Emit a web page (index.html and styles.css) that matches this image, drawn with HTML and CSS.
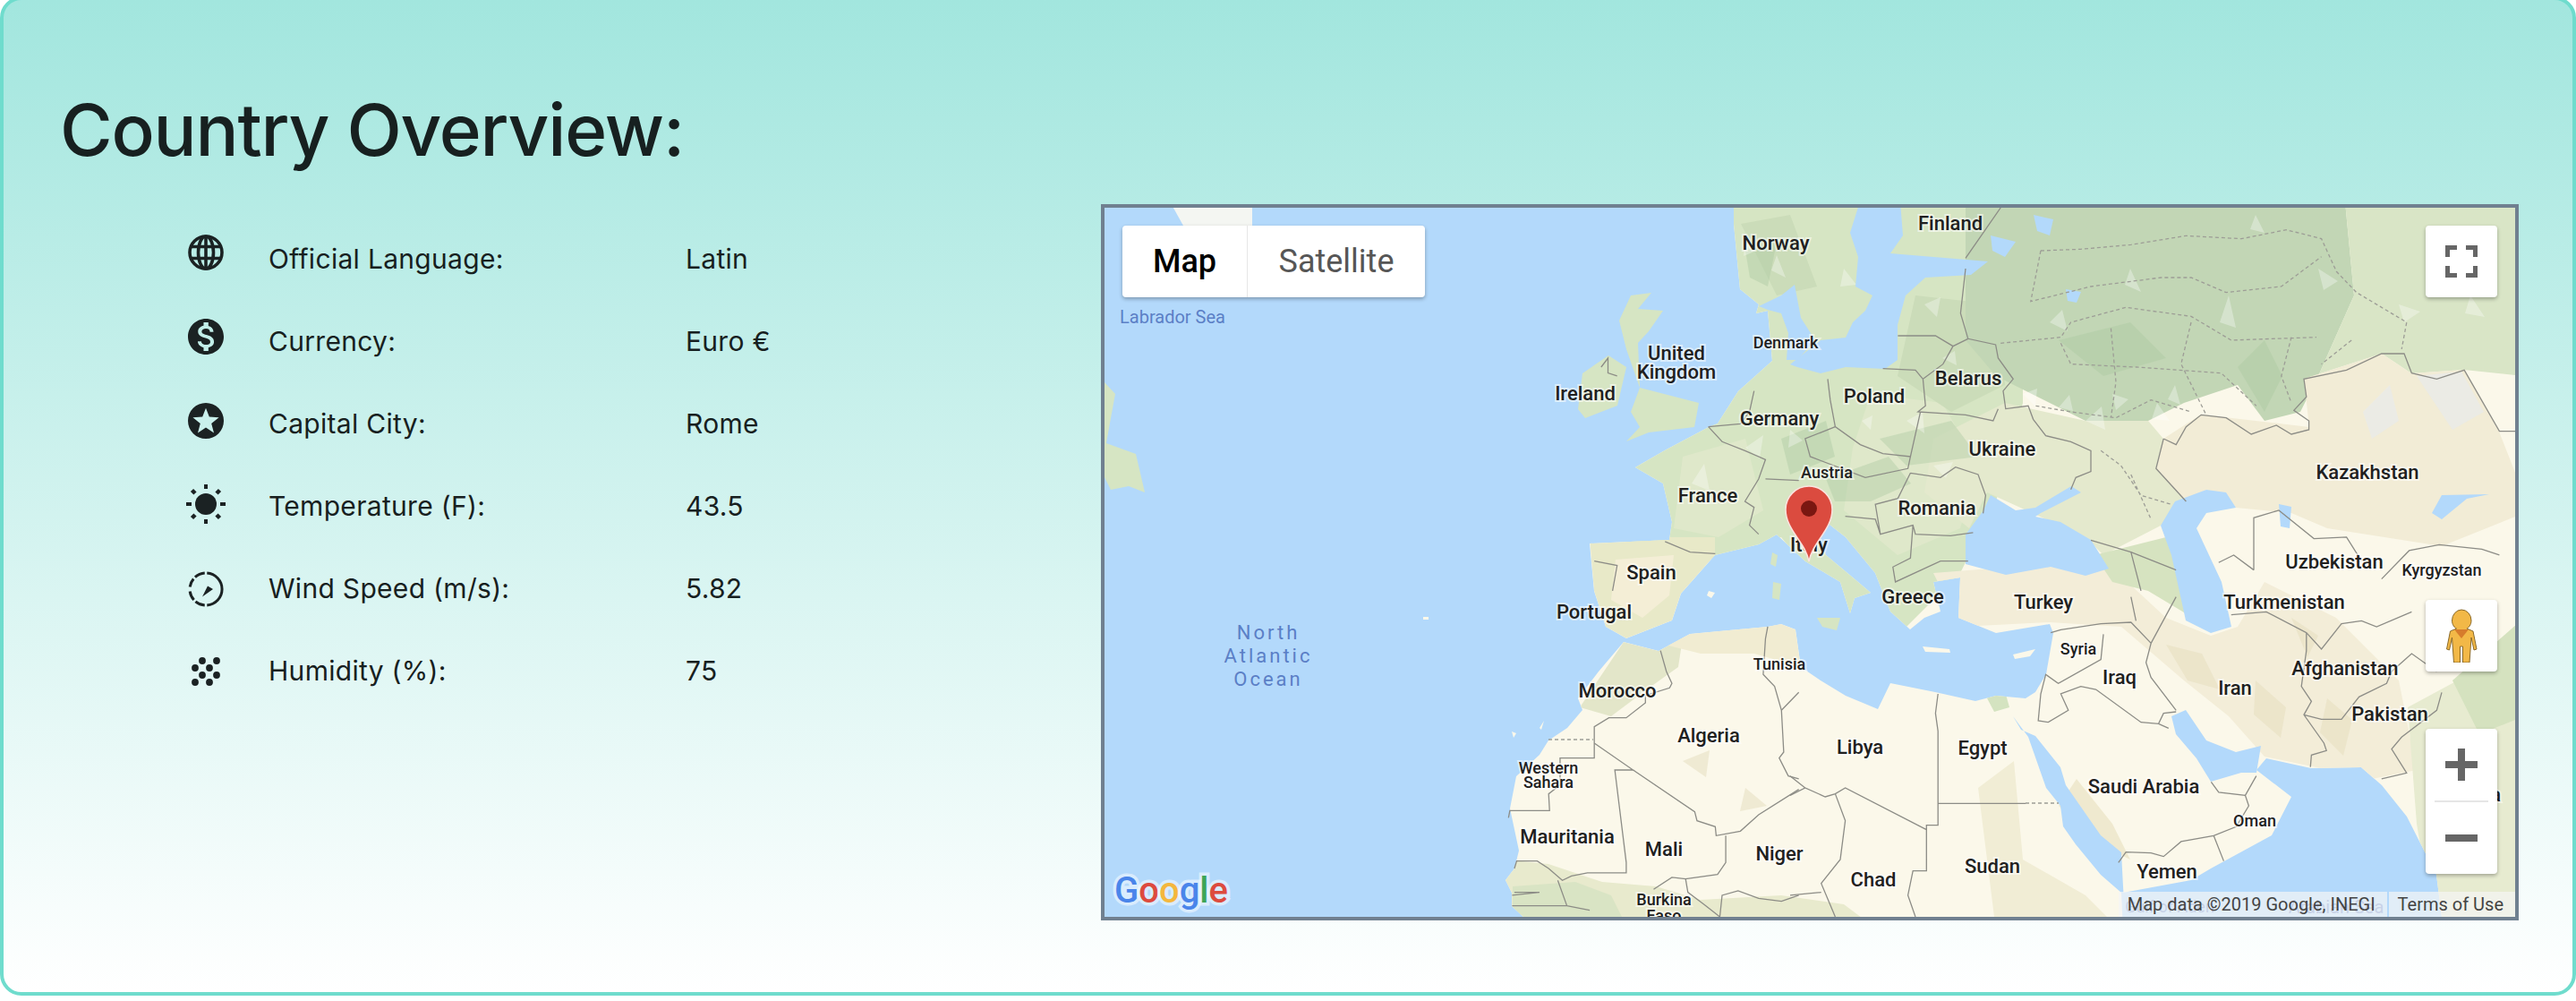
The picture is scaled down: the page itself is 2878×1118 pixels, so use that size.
FILE: index.html
```html
<!DOCTYPE html>
<html>
<head>
  <title>Country Overview</title>
  <link rel="stylesheet" href="styles.css">
</head>
<body>
  <div class="card">
    <h1 class="title">Country Overview:</h1>
    <div class="content">
      <div class="facts">
        <div class="fact">
          <svg class="icon icon-globe" viewBox="0 0 40 40"><g fill="none" stroke="#1b2223" stroke-width="3.6"><circle cx="20" cy="20" r="18"/><ellipse cx="20" cy="20" rx="8.500" ry="18"/><path d="M3 13.500h34M3 26.500h34M20 2v36"/></g></svg>
          <span class="label">Official Language:</span>
          <span class="value">Latin</span>
        </div>
        <div class="fact">
          <svg class="icon icon-dollar" viewBox="2 2 20 20"><path fill="#1b2223" d="M12 2C6.48 2 2 6.48 2 12s4.48 10 10 10 10-4.48 10-10S17.52 2 12 2zm1.41 16.09V20h-2.67v-1.93c-1.71-.36-3.16-1.46-3.27-3.4h1.96c.1 1.05.82 1.87 2.65 1.87 1.96 0 2.4-.98 2.4-1.59 0-.83-.44-1.61-2.67-2.14-2.48-.6-4.18-1.62-4.18-3.67 0-1.72 1.39-2.84 3.11-3.21V4h2.67v1.95c1.86.45 2.79 1.86 2.85 3.39H14.3c-.05-1.11-.64-1.87-2.22-1.87-1.5 0-2.4.68-2.4 1.64 0 .84.65 1.39 2.67 1.91s4.18 1.39 4.18 3.91c-.01 1.83-1.38 2.83-3.12 3.16z"/></svg>
          <span class="label">Currency:</span>
          <span class="value">Euro €</span>
        </div>
        <div class="fact">
          <svg class="icon icon-star" viewBox="2 2 20 20"><path fill="#1b2223" fill-rule="evenodd" d="M12 2a10 10 0 1 0 0 20 10 10 0 0 0 0-20zM12 4.900l1.900 4.900 5.400.3-4.200 3.400 1.400 5.200-4.500-2.900-4.500 2.900 1.400-5.200-4.200-3.400 5.400-.3z"/></svg>
          <span class="label">Capital City:</span>
          <span class="value">Rome</span>
        </div>
        <div class="fact">
          <svg class="icon icon-sun" viewBox="0 0 44 44"><circle cx="22" cy="22" r="12" fill="#1b2223"/><path stroke="#1b2223" stroke-width="4" d="M22 0v5M22 39v5M0 22h6M38 22h6"/><path stroke="#1b2223" stroke-width="4.500" d="M6.500 6.500l3.500 3.500M34 34l3.500 3.500M37.500 6.500L34 10M10 34l-3.500 3.500"/></svg>
          <span class="label">Temperature (F):</span>
          <span class="value">43.5</span>
        </div>
        <div class="fact">
          <svg class="icon icon-wind" viewBox="0 0 40 40"><path fill="none" stroke="#1b2223" stroke-width="3" d="M21.26 2.04A18 18 0 0 1 21.26 37.96M18.74 37.96A18 18 0 0 1 8.43 33.79M6.62 32.04A18 18 0 0 1 2.18 22.5M2.18 17.5A18 18 0 0 1 6.21 8.43M7.96 6.62A18 18 0 0 1 18.74 2.04"/><path fill="#1b2223" d="M16 28.500L28 20l-6-3.500z"/></svg>
          <span class="label">Wind Speed (m/s):</span>
          <span class="value">5.82</span>
        </div>
        <div class="fact">
          <svg class="icon icon-humid" viewBox="0 0 32 32"><g fill="#1b2223"><circle cx="12" cy="4" r="3.9"/><circle cx="28" cy="4" r="3.9"/><circle cx="4" cy="12" r="3.9"/><circle cx="20" cy="12" r="3.9"/><circle cx="12" cy="20" r="3.9"/><circle cx="28" cy="20" r="3.9"/><circle cx="4" cy="28" r="3.9"/><circle cx="20" cy="28" r="3.9"/></g></svg>
          <span class="label">Humidity (%):</span>
          <span class="value">75</span>
        </div>
      </div>

      <div class="map">
        <svg class="map-canvas" viewBox="1234 232 1576 792">
          <defs>
            <path id="landShape" d="M1937 225L1937 250 1944 323 1965 340 1962 350 1975 347 1980 403 1942 437 1919 473 1909 477 1860 503 1827 522 1858 540 1868 583 1865 603 1776 607 1781 660 1794 700 1817 713 1868 693 1878 663 1916 620 1965 608 1985 597 2017 627 2056 650 2067 685 2072 668 2090 662 2070 645 2040 620 2028 595 2034 578 2062 600 2095 640 2112 683 2134 703 2150 690 2168 683 2160 650 2190 645 2188 690 2230 707 2290 697 2294 707 2286 753 2274 773 2263 780 2230 777 2207 783 2162 773 2112 763 2098 792 2062 777 2034 760 2012 745 2006 703 1990 697 1975 700 1888 708 1853 727 1814 717 1786 750 1763 780 1768 793 1751 813 1730 827 1720 843 1694 867 1687 903 1697 950 1692 970 1682 983 1689 997 1689 1012 1702 1024 1702 1040 2372 1040 2372 997 2448 983 2470 970 2538 933 2560 890 2521 860 2532 847 2582 858 2638 857 2661 877 2689 912 2722 977 2728 1024 2728 1040 2820 1040 2820 225Z"/>
            <clipPath id="landClip"><use href="#landShape"/></clipPath>
          </defs>

          <rect class="sea" x="1234" y="232" width="1576" height="792"/>
          <use href="#landShape" fill="#fbf8ea"/>

          <g clip-path="url(#landClip)">
            <!-- vegetation -->
            <path fill="#d6e5c3" d="M1700 225H2260L2260 450 2230 560 2190 640 2130 700 2060 690 1990 600 1916 625 1868 610 1760 600Z"/>
            <path fill="#dfe8ca" d="M2090 440L2170 450 2210 520 2190 590 2120 620 2060 570 2070 500ZM1880 510L1950 490 1970 570 1920 600 1870 590Z"/>
            <path fill="#cbdcb9" d="M2140 330L2230 340 2240 430 2180 460 2120 420ZM1945 250L2000 240 2030 320 1985 330Z"/>
            <path fill="#c2d6b5" d="M2196 225H2620L2630 330 2590 420 2570 460 2530 470 2500 430 2440 450 2400 470 2330 470 2270 440 2230 420 2196 380Z"/>
            <path fill="#d9e5c6" d="M2620 225H2820V420L2753 413 2694 417 2661 395 2574 423 2590 420 2630 330Z"/>
            <path fill="#e4e9cd" d="M2160 490L2240 450 2330 470 2400 470 2417 490 2409 523 2442 560 2414 587 2350 620 2330 600 2220 550 2200 590 2150 550Z"/>
            <path fill="#f2ecd6" d="M2417 490L2459 463 2580 477 2574 423 2661 395 2694 417 2753 413 2792 482 2820 553 2820 573 2728 610 2600 590 2560 573 2498 567 2465 547 2442 560 2409 523Z"/>
            <path fill="#e8e9c8" d="M1776 600H1916L1916 620 1878 663 1868 693 1817 713 1794 700 1781 660Z"/>
            <path fill="#f4eed6" d="M1805 625L1870 620 1865 665 1835 690 1800 670Z"/>
            <path fill="#e3e6c9" d="M1814 717L1853 727 1880 712 1875 745 1840 770 1800 800 1765 790Z"/>
            <path fill="#f1ecd2" d="M1860 720L1888 708 1990 697 2006 703 2012 745 1960 730 1900 730Z"/>
            <path fill="#f3edd8" d="M2160 640L2350 625 2420 690 2470 710 2500 700 2530 650 2610 690 2680 760 2700 860 2650 870 2530 845 2490 800 2440 760 2370 700 2290 695 2190 700Z"/>
            <path fill="#d6e3c0" d="M2340 620L2420 600 2440 660 2480 700 2450 690 2400 660 2360 650Z"/>
            <path fill="#e7ebd0" d="M2690 790L2820 720V1040H2720L2700 920Z"/>
            <path fill="#d5e2bf" d="M2740 760L2820 690V800L2770 820Z"/>
            <path fill="#e8eacd" d="M1680 960L1730 965 1790 985 1850 990 1900 1005 1990 1000 2060 1010 2100 1040H1680Z"/>
            <path fill="#d9e4c4" d="M1690 990L1760 985 1800 1000 1820 1040H1690Z"/>
            <path fill="#f1edd5" d="M2210 880L2250 850 2260 960 2330 1000 2370 1040H2230Z"/>
            <path fill="#efe9cf" d="M2300 900L2340 940 2380 960 2360 920 2320 870Z"/>
            <path fill="#d4e3c0" d="M2218 776L2240 772 2245 790 2228 795Z"/>
            <path fill="#a9c8a0" opacity=".4" d="M2040 535L2110 510 2135 540 2090 560 2050 560ZM2100 490L2180 470 2210 510 2130 520ZM2500 410L2530 380 2550 420 2530 460ZM2300 380L2380 360 2420 400 2350 420ZM1990 490L2040 470 2050 510 2000 530ZM1950 280L1985 270 1975 320 1955 310Z"/>
            <!-- terrain mottling -->
            <path fill="#fff" opacity=".32" d="M1950 260l12 20-14 6zM1985 285l10 25-16-8zM2060 300l14 18-18 2zM1890 540l14-22 6 30zM1950 500l20-14-4 26zM2000 480l14 12-16 8zM2130 470l18-10 2 24zM2160 520l22-4-8 18zM2290 360l14-14 6 24zM2380 300l12 26-18-8zM2480 360l10-30 8 36zM2330 470l18-16 4 26zM2410 450l14 20-20-2zM2590 300l22 14-16 10zM2680 340l24 8-18 12zM2760 330l16 24-22-4zM2520 240l10 20-16-4zM2150 340l18-8-4 22zM2260 440l16-6-2 20zM2300 455l12-14 4 18zM2360 440l18 6-14 12zM2430 430l6 22-14-6zM2170 400l14-8 2 16zM2080 470l12-6-2 16z"/>
            <path fill="#ebebe5" d="M2700 420L2750 415 2775 460 2740 480 2720 450ZM2640 460L2670 430 2680 470 2650 490Z"/>
            <path fill="#e6dfbf" opacity=".55" d="M2420 720l40 10 20 40-36-10zM2520 760l34 30-6 34-30-26zM2600 780l28 24-10 40-26-26zM2560 690l30 20-12 24zM1880 850l30-12-4 30zM1950 880l24 20-30 6z"/>
          </g>

          <!-- water on land -->
          <g class="sea">
            <path d="M2078 225H2123L2126 263 2112 283 2221 292 2202 307 2151 310 2129 330 2120 363 2120 402 2106 412 2062 410 2034 417 2008 410 2000 407 2034 380 2062 377 2070 360 2084 347 2092 330 2073 320 2076 287 2067 260Z"/>
            <path d="M1965 342L1990 330 2005 318 2012 355 2028 380 2008 402 1996 402 1998 372 1990 350 1975 346Z"/>
            <path d="M2224 553L2216 570 2196 597 2196 630 2241 642 2291 633 2330 643 2356 635 2336 603 2302 583 2274 577 2280 573 2325 550 2314 543 2274 567 2252 570Z"/>
            <path d="M2465 547L2487 550 2498 567 2465 573 2454 590 2482 650 2493 700 2470 707 2442 693 2437 670 2426 620 2414 587 2430 560Z"/>
            <path d="M2249 800L2266 823 2286 880 2302 900 2305 923 2319 943 2347 977 2370 997 2372 1040H2375L2372 990 2370 952 2347 933 2308 877 2302 857 2274 822 2258 815Z"/>
            <path d="M2426 800L2442 793 2465 827 2498 840 2526 833 2521 863 2504 863 2470 873 2454 847 2431 820Z"/>
            <path d="M2546 563L2560 566 2558 590 2548 588ZM2717 573L2728 553 2781 552 2756 557 2728 580ZM2224 263L2252 270 2240 287 2226 280ZM2272 240L2294 245 2290 263 2276 258ZM2308 323L2325 326 2320 338 2310 336Z"/>
          </g>

          <!-- islands -->
          <g fill="#d6e5c3">
            <path d="M1768 417L1797 397 1817 410 1807 453 1771 467 1763 457Z"/>
            <path d="M1809 358L1822 330 1845 327 1830 345 1858 347 1842 370 1830 383 1832 433 1898 450 1893 477 1842 483 1817 493 1832 477 1822 460 1832 433 1817 390Z"/>
            <path d="M1234 427L1246 440 1241 467 1236 495 1269 507 1279 550 1261 543 1241 547 1234 533Z"/>
            <path d="M1980 617L1986 620 1984 633 1978 630ZM1981 650L1990 652 1988 670 1980 668ZM2030 690L2056 690 2052 704 2036 700Z"/>
          </g>
          <path fill="#f4f6f2" d="M1307 225L1322 252H1399V225Z"/>
          <path fill="#fbf8ea" d="M2148 722l30 3 1 4-28-1zM2249 731l25-6-6 8-17 3zM1909 660l7 2-4 6-5-3zM1689 817l5 2-3 5zM1720 813l5-8-3 10zM1590 689h6v3h-6z"/>

          <!-- borders -->
          <g class="border" transform="translate(1210 220) scale(.51 .3333)">
            <path d="M1370 770L1400 820 1450 850 1495 880 1480 945 1450 1020 1470 1040 1460 1100 1480 1130"/>
            <path d="M1275 1155L1330 1190 1385 1195M1120 1220L1170 1235 1160 1320M1470 650L1460 720 1440 760 1370 770M1495 945L1568 950M1135 570L1150 540 1150 590 1170 600"/>
          </g>
          <g class="border" transform="translate(2000 220) scale(.56 .3333)">
            <path d="M420 36L350 205M350 240L340 390 355 475 410 495 415 540 445 610 425 650 430 710 475 700 485 745 510 800 560 820 600 850 600 920 570 940 560 980"/>
            <path d="M215 465L290 465 325 500 355 475M325 500L305 560 265 610 270 700 255 720 350 730 405 750 415 710M185 575L250 580 265 610M75 610L80 680 90 770 140 830 185 860 240 870 260 720"/>
            <path d="M240 870L235 910 150 940 40 870 30 810 90 770M240 925L300 940 330 905 375 930 390 1000 385 1060M240 925L215 1010 170 1030 180 1130M110 1070L170 1080 180 1130 245 1100 250 1130 320 1135 365 1125M245 1100L240 1210 205 1240 210 1290 300 1220 355 1220"/>
            <path d="M745 810L770 830 790 770 820 730 870 740 920 795 970 765 1000 795 1035 780 1035 750 1005 715 1030 670 1025 610 1110 580 1180 525 1225 525 1240 590 1290 610 1345 580 1415 785 1447 785M790 1020L730 910 745 810"/>
            <path d="M925 1250V1075L975 1050 1045 1145 1110 1140 1140 1220M925 1250L885 1200 855 1225M1180 1280L1235 1185 1295 1165 1380 1180 1415 1200M600 1150L680 1190 770 1250M680 1190L700 1320"/>
          </g>
          <g class="border border-dash" transform="translate(2000 220) scale(.56 .3333)">
            <path d="M500 180L580 175 680 160 790 130 900 140 990 110 1060 140 1090 250 1130 320 1230 420 1220 510M500 180L480 350 600 300 740 270 800 270 870 320 980 300 1060 200"/>
            <path d="M420 490L540 470 560 420 670 370 800 400 880 480 1050 470M490 700L560 720 650 740 720 680 800 720M640 440L650 620 640 740M800 420L780 560 830 730M540 490L560 560 690 570 860 590 930 700M1000 470L980 600 1000 690M620 850L660 900 700 1000 760 1030M680 930L720 1080M1120 480L1060 560"/>
          </g>
          <g class="border" transform="translate(1210 650) scale(.51 .3333)">
            <path d="M1265 230L1278 300 1290 340 1285 355 1232 380 1232 405 1190 455 1152 455 1120 485 1120 590 1045 590 1045 680 1020 710 1022 766 935 766 932 790"/>
            <path d="M1120 540L1205 630 1165 630 1190 940 1190 975 1105 975 1070 985 1050 1000 1020 960 995 935 950 935 945 960"/>
            <path d="M1205 630L1340 770 1345 800 1385 820 1387 850 1440 835 1480 780 1568 695M1408 850V940L1390 980 1320 995 1290 990 1250 1030M1500 150L1495 190 1490 310 1515 350 1530 430 1535 570 1525 590 1545 650 1568 660M1530 430L1568 370"/>
            <path d="M1320 995L1325 1040 1360 1080 1395 1122 1400 1050 1435 1035 1480 1060 1530 1070 1568 1050M945 1040L1000 1040 940 1050M940 1085L1060 1085 1110 1100M1040 1000L1060 1085"/>
          </g>
          <path class="border border-dash" d="M1730 826H1780"/>
          <g class="border" transform="translate(2000 650) scale(.56 .3333)">
            <path d="M295 375L290 440 295 500V815H272V830L110 690 90 710 70 720 30 690 0 715M0 650L30 690M295 742H470M272 830V968H245L235 1050 250 1122M90 710L110 800 100 930 62 1010 90 1122M62 1040L0 1050"/>
            <path d="M520 170L540 160 620 140 680 135 720 205 710 270 720 320 770 430M625 175L620 260 535 340 510 310 500 375 495 465 515 470 555 430 540 375 580 350 610 360 700 470 735 475 745 440 770 435M735 475L755 490"/>
            <path d="M840 670L855 705 908 715 915 750 890 820 845 850 780 870 745 920 720 908 670 905 655 940M908 715L930 650M845 850L865 935"/>
            <path d="M880 110L950 100 1030 170 1030 230 1020 350 1040 400 1025 445 1065 540 1070 565 1040 580 1038 620M1025 445L1060 460H1100L1135 385 1190 340 1200 300 1240 240 1290 300M1030 170L1060 225 1100 140 1140 130 1170 150 1240 100M1300 370L1290 430 1220 520 1200 560 1230 640 1180 660M680 50L690 130M720 205L770 50"/>
          </g>
          <path class="border border-dash" d="M2263 897H2300"/>

          <!-- labels -->
          <text class="place" x="2179" y="249">Finland</text>
          <text class="place" x="1984" y="271">Norway</text>
          <text class="place small" x="1995" y="382">Denmark</text>
          <text class="place" x="1873" y="394">United</text>
          <text class="place" x="1873" y="415">Kingdom</text>
          <text class="place" x="1771" y="439">Ireland</text>
          <text class="place" x="2094" y="442">Poland</text>
          <text class="place" x="2199" y="422">Belarus</text>
          <text class="place" x="1988" y="467">Germany</text>
          <text class="place" x="2237" y="501">Ukraine</text>
          <text class="place" x="2645" y="527">Kazakhstan</text>
          <text class="place small" x="2041" y="527">Austria</text>
          <text class="place" x="1908" y="553">France</text>
          <text class="place" x="2164" y="567">Romania</text>
          <text class="place" x="2021" y="608">Italy</text>
          <text class="place" x="2608" y="627">Uzbekistan</text>
          <text class="place small" x="2728" y="636">Kyrgyzstan</text>
          <text class="place" x="1845" y="639">Spain</text>
          <text class="place" x="2137" y="666">Greece</text>
          <text class="place" x="2283" y="672">Turkey</text>
          <text class="place" x="2552" y="672">Turkmenistan</text>
          <text class="place" x="1781" y="683">Portugal</text>
          <text class="place small" x="1988" y="741">Tunisia</text>
          <text class="place small" x="2322" y="724">Syria</text>
          <text class="place" x="2368" y="756">Iraq</text>
          <text class="place" x="2620" y="746">Afghanistan</text>
          <text class="place" x="2497" y="768">Iran</text>
          <text class="place" x="2670" y="797">Pakistan</text>
          <text class="place" x="1807" y="771">Morocco</text>
          <text class="place" x="1909" y="821">Algeria</text>
          <text class="place" x="2078" y="834">Libya</text>
          <text class="place" x="2215" y="835">Egypt</text>
          <text class="place" x="2395" y="878">Saudi Arabia</text>
          <text class="place small" x="2519" y="916">Oman</text>
          <text class="place small" x="1730" y="857">Western</text>
          <text class="place small" x="1730" y="873">Sahara</text>
          <text class="place" x="1751" y="934">Mauritania</text>
          <text class="place" x="1859" y="948">Mali</text>
          <text class="place" x="1988" y="953">Niger</text>
          <text class="place" x="2093" y="982">Chad</text>
          <text class="place" x="2226" y="967">Sudan</text>
          <text class="place" x="2421" y="973">Yemen</text>
          <text class="place small" x="1859" y="1004">Burkina</text>
          <text class="place small" x="1859" y="1022">Faso</text>
          <text class="place" x="2770" y="887">India</text>
          <text class="ocean mid" x="1310" y="354">Labrador Sea</text>
          <text class="ocean spaced" x="1417" y="706">North</text>
          <text class="ocean spaced" x="1417" y="732">Atlantic</text>
          <text class="ocean spaced" x="1417" y="758">Ocean</text>
          <text class="ocean small" x="2424" y="1012">Gulf of Aden</text>
          <text class="ocean mid" x="2610" y="1013">Arabian Sea</text>

          <!-- marker -->
          <path fill="#db4b3f" stroke="#fbe3df" stroke-width="1.500" d="M2021 627C2017 605 1995 592 1995 569A26 26 0 0 1 2047 569C2047 592 2025 605 2021 627Z"/>
          <circle cx="2021" cy="568" r="9" fill="#7a1711"/>

          <!-- logo -->
          <text class="logo" x="1245" y="1008"><tspan fill="#4a85ea">G</tspan><tspan fill="#dd4b3e">o</tspan><tspan fill="#f4b73d">o</tspan><tspan fill="#4a85ea">g</tspan><tspan fill="#3ea556">l</tspan><tspan fill="#dd4b3e">e</tspan></text>
        </svg>

        <div class="map-type">
          <span class="map-type-btn map-type-active">Map</span>
          <span class="map-type-btn">Satellite</span>
        </div>

        <div class="map-ctl map-full">
          <svg viewBox="0 0 36 36" width="36" height="36"><path fill="none" stroke="#666" stroke-width="5" d="M2.500 13V2.500H13M23 2.500h10.500V13M33.500 23v10.500H23M13 33.500H2.500V23"/></svg>
        </div>

        <div class="map-ctl map-peg">
          <svg viewBox="0 0 36 60" width="36" height="60"><path fill="#f2b847" stroke="#8a6a2a" stroke-width="1" d="M18 1a11 12 0 0 1 11 12c0 5-3 8-5 9l7 3 4 20-3 1-3-14-2 28H19.500V42h-3v18H9.500L7.500 32l-3 14-3-1 4-20 7-3c-2-1-5-4-5-9A11 12 0 0 1 18 1z"/><path fill="#d67c2c" d="M10 23h16l-8 10z"/></svg>
        </div>

        <div class="map-ctl map-zoom">
          <div class="zoom-btn">
            <svg viewBox="0 0 36 36" width="36" height="36"><path fill="#666" d="M14 0h8v14h14v8H22v14h-8V22H0v-8h14z"/></svg>
          </div>
          <div class="zoom-divider"></div>
          <div class="zoom-btn">
            <svg viewBox="0 0 36 8" width="36" height="8"><rect width="36" height="8" fill="#666"/></svg>
          </div>
        </div>

        <div class="map-footer">
          <span class="map-footer-item">Map data ©2019 Google, INEGI</span>
          <span class="map-footer-item">Terms of Use</span>
        </div>
      </div>
    </div>
  </div>
</body>
</html>
```

FILE: styles.css
```css
body {
  margin: 0;
  background-color: #fff;
  font-family: Inter, "Liberation Sans", sans-serif;
  color: #172020;
  overflow: hidden;
}
.card {
  box-sizing: border-box;
  height: 1116px;
  margin-top: -4px;
  padding: 95px 60px 0 63px;
  border: 4px solid #6fdccd;
  border-radius: 24px;
  background: linear-gradient(#a2e6de, #fff);
}
.title {
  margin: 0 0 33px;
  font-size: 80px;
  font-weight: 500;
  line-height: 100px;
  letter-spacing: -1.2px;
}
.content {
  display: flex;
  justify-content: space-between;
  align-items: flex-start;
}
.facts {
  margin-left: 143px;
  padding-top: 15px;
}
.fact {
  display: grid;
  grid-template-columns: 40px 416px auto;
  column-gap: 50px;
  height: 92px;
  align-items: center;
  font-size: 30px;
  letter-spacing: 0.3px;
}
.icon {
  display: block;
  width: 40px;
  height: 40px;
  justify-self: center;
}
.icon-globe { margin-bottom: 14px; }
.icon-dollar { margin-bottom: 10px; }
.icon-star { margin-bottom: 6px; }
.icon-sun { width: 44px; height: 44px; margin-bottom: 4px; }
.icon-wind { margin-top: 2px; }
.icon-humid { width: 32px; height: 32px; margin-top: 2px; }

.map {
  position: relative;
  box-sizing: border-box;
  width: 1584px;
  height: 800px;
  border: 4px solid #708090;
  overflow: hidden;
}
.map-canvas {
  display: block;
  width: 1576px;
  height: 792px;
}
.sea { fill: #b3d9fb; }
.border {
  fill: none;
  stroke: #8c8c86;
}
.border path, path.border {
  vector-effect: non-scaling-stroke;
  stroke-width: 1.3;
}
.border-dash {
  stroke: #9d9d96;
  stroke-dasharray: 4 3;
}
.place {
  font: 500 22px Roboto, sans-serif;
  fill: #202020;
  stroke: #fff;
  stroke-width: 4px;
  stroke-opacity: 0.55;
  paint-order: stroke;
  text-anchor: middle;
  dominant-baseline: central;
}
.ocean {
  font: 400 22px Roboto, sans-serif;
  fill: #5b7fc6;
  text-anchor: middle;
  dominant-baseline: central;
}
.small { font-size: 18px; }
.mid { font-size: 20px; }
.spaced { letter-spacing: 3px; }
.logo {
  font: 500 40px Roboto, sans-serif;
  stroke: #fff;
  stroke-width: 7px;
  stroke-opacity: 0.5;
  paint-order: stroke;
}

.map-type, .map-ctl {
  position: absolute;
  display: flex;
  background-color: #fff;
  border-radius: 4px;
  box-shadow: 0 2px 4px rgba(0, 0, 0, 0.3);
}
.map-type {
  top: 20px;
  left: 20px;
  height: 80px;
}
.map-type-btn {
  display: flex;
  align-items: center;
  justify-content: center;
  width: 198px;
  font: 400 36px Roboto, sans-serif;
  color: #565656;
}
.map-type-active {
  width: 139px;
  border-right: 1px solid #e6e6e6;
  font-weight: 500;
  color: #000;
}
.map-ctl {
  right: 20px;
  width: 80px;
  align-items: center;
  justify-content: center;
}
.map-full {
  top: 20px;
  height: 80px;
}
.map-peg {
  top: 438px;
  height: 80px;
}
.map-zoom {
  top: 582px;
  height: 162px;
  flex-direction: column;
}
.zoom-btn {
  display: flex;
  align-items: center;
  justify-content: center;
  width: 80px;
  height: 80px;
}
.zoom-divider {
  flex: none;
  width: 60px;
  height: 2px;
  background-color: #e6e6e6;
}
.map-footer {
  position: absolute;
  right: 0;
  bottom: 0;
  display: flex;
  height: 28px;
  font: 400 20px/28px Roboto, sans-serif;
  color: #444;
}
.map-footer-item {
  padding: 0 13px 0 10px;
  background-color: rgba(245, 245, 245, 0.7);
  white-space: nowrap;
}
.map-footer-item + .map-footer-item {
  margin-left: 2px;
}
```
